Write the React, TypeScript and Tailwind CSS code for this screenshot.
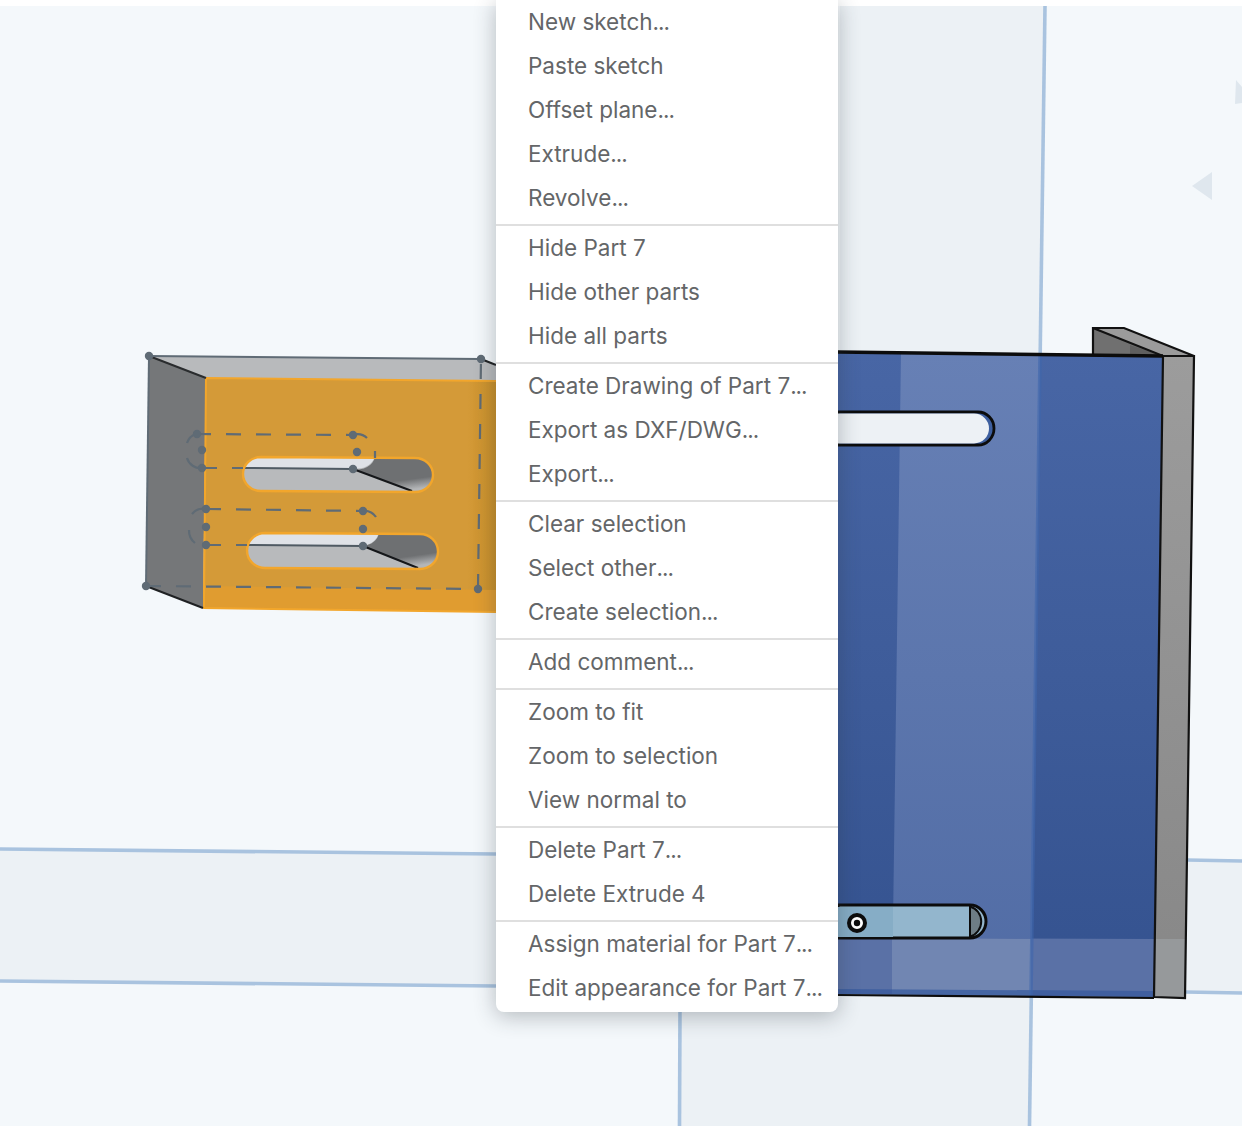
import React from "react";

const menuGroups = [
  ["New sketch...", "Paste sketch", "Offset plane...", "Extrude...", "Revolve..."],
  ["Hide Part 7", "Hide other parts", "Hide all parts"],
  ["Create Drawing of Part 7...", "Export as DXF/DWG...", "Export..."],
  ["Clear selection", "Select other...", "Create selection..."],
  ["Add comment..."],
  ["Zoom to fit", "Zoom to selection", "View normal to"],
  ["Delete Part 7...", "Delete Extrude 4"],
  ["Assign material for Part 7...", "Edit appearance for Part 7..."],
];

function ContextMenu() {
  return (
    <div className="absolute left-[496px] top-0 w-[342px] bg-white rounded-b-lg pb-0.5 shadow-[0_4px_22px_rgba(40,50,60,0.32)] font-['Inter',sans-serif] text-[22.5px] text-[#646668]">
      {menuGroups.map((group, i) => (
        <div
          key={i}
          className={i < menuGroups.length - 1 ? "pb-1 border-b-2 border-[#dfdfdf]" : ""}
        >
          {group.map((label) => (
            <div key={label} className="h-11 flex items-center pl-8 whitespace-pre">
              <span>
                {label.replace("...", "")}
                {label.endsWith("...") && <span className="tracking-[-1px]">...</span>}
              </span>
            </div>
          ))}
        </div>
      ))}
    </div>
  );
}

function Planes() {
  return (
    <g>
      {/* darker plane bands behind the model */}
      <polygon points="840,6 1045,6 1030,1126 680,1126 680,1000 840,1000" fill="#ecf1f5" />
      <polygon points="0,848 496,853 496,985 0,980" fill="#ecf1f5" />
      <polygon points="1185,860 1242,861 1242,993 1185,992" fill="#ecf1f5" />
      <g stroke="#a9c3df" strokeWidth="3.6" fill="none">
        <line x1="1045" y1="6" x2="1029.5" y2="1126" />
        <line x1="680" y1="1010" x2="679.5" y2="1126" />
        <line x1="0" y1="849" x2="496" y2="854" />
        <line x1="0" y1="981" x2="496" y2="986" />
        <line x1="1187" y1="860" x2="1242" y2="861" />
        <line x1="1185" y1="992" x2="1242" y2="993" />
      </g>
      <polygon points="1192,186 1212,172 1212,200" fill="#dfe7ee" />
      <polygon points="1236,80 1242,87 1242,103 1235,104" fill="#dfe7ee" />
    </g>
  );
}

function LeftPart() {
  const slot1 = "M261,457 L415,458 A18,17 0 0 1 415,492 L261,491 A18,17 0 0 1 261,457 Z";
  const slot2 = "M265,533 L420,534 A18,17.5 0 0 1 420,569 L265,568 A18,17.5 0 0 1 265,533 Z";
  return (
    <g>
      <defs>
        <clipPath id="slotA">
          <path d={slot1} />
        </clipPath>
        <clipPath id="slotB">
          <path d={slot2} />
        </clipPath>
        <linearGradient id="orangeEdge" x1="0" x2="1" y1="0" y2="0">
          <stop offset="0.9" stopColor="#d49a38" />
          <stop offset="1" stopColor="#ca9029" />
        </linearGradient>
        <linearGradient id="slotDark" x1="0" x2="0.3" y1="0" y2="1">
          <stop offset="0.74" stopColor="#6e7072" />
          <stop offset="1" stopColor="#b4b6b8" />
        </linearGradient>
      </defs>
      <polygon points="149,356 206,378 203,608 146,586" fill="#757779" />
      <polygon points="149,356 481,359 496,366 496,381 206,378" fill="#b8babc" />
      <polygon points="206,378 496,381 496,612 203,608" fill="url(#orangeEdge)" />
      <polygon points="204,586 496,590 496,612 203,608" fill="#e09c30" />
      <path d="M496,381 L206,378 L204,608 L496,612" fill="none" stroke="#f2a62c" strokeWidth="2" />
      <line x1="149" y1="356" x2="206" y2="378" stroke="#2a2c2e" strokeWidth="2" />
      <line x1="146" y1="586" x2="203" y2="608" stroke="#1f2123" strokeWidth="2" />
      <line x1="481" y1="359" x2="496" y2="365" stroke="#1f2123" strokeWidth="2" />
      <polyline points="149,356 481,359" fill="none" stroke="#5f6b75" strokeWidth="2" />
      <polyline points="149,356 146,586" fill="none" stroke="#5f6b75" strokeWidth="2" />

      <g clipPath="url(#slotA)">
        <rect x="240" y="455" width="195" height="40" fill="#b8babc" />
        <path d="M240,455 L375,455 A18,15 0 0 1 356,468.5 L240,468 Z" fill="#dfe2e7" />
        <path d="M375,457 L436,457 L436,494 L412,491 L353,469 A18,15 0 0 0 375,457 Z" fill="url(#slotDark)" />
        <line x1="353" y1="469" x2="412" y2="491" stroke="#15171a" strokeWidth="2" />
        <line x1="243" y1="468" x2="353" y2="469" stroke="#4f5a63" strokeWidth="2" />
      </g>
      <path d={slot1} fill="none" stroke="#f2a62c" strokeWidth="2.4" />

      <g clipPath="url(#slotB)">
        <rect x="245" y="530" width="195" height="42" fill="#b8babc" />
        <path d="M245,530 L379,530 A18,15 0 0 1 362,545.5 L245,545 Z" fill="#dfe2e7" />
        <path d="M379,533 L441,533 L441,570 L418,568 L363,546 A18,15 0 0 0 379,533 Z" fill="url(#slotDark)" />
        <line x1="363" y1="546" x2="418" y2="568" stroke="#15171a" strokeWidth="2" />
        <line x1="247" y1="545" x2="363" y2="546" stroke="#4f5a63" strokeWidth="2" />
      </g>
      <path d={slot2} fill="none" stroke="#f2a62c" strokeWidth="2.4" />

      {/* sketch overlay */}
      <g fill="none" stroke="#5f6b75" strokeWidth="2.2">
        <line x1="196" y1="434" x2="353" y2="435" strokeDasharray="15 15" />
        <line x1="202" y1="468" x2="243" y2="468" strokeDasharray="15 15" />
        <line x1="206" y1="509" x2="363" y2="511" strokeDasharray="15 15" />
        <line x1="206" y1="545" x2="247" y2="545" strokeDasharray="15 15" />
        <line x1="146" y1="586" x2="478" y2="589" strokeDasharray="15 15" />
        <line x1="478" y1="589" x2="481" y2="359" strokeDasharray="15 15" />
        <path d="M187,443 A14,14 0 0 1 196,434" />
        <path d="M187,458 A14,14 0 0 0 202,468" />
        <path d="M353,435 A14,14 0 0 1 367,438" />
        <path d="M192,514 A14,14 0 0 1 206,509" />
        <path d="M189,530 A16,16 0 0 0 195,543" />
        <path d="M363,511 A14,14 0 0 1 376,517" />
        <path d="M375,451 L375,458" />
      </g>
      <g fill="#5f6b75">
        {[
          [149, 356], [481, 359], [146, 586], [478, 589],
          [197, 434], [353, 435], [202, 450], [202, 468], [357, 452], [353, 469],
          [206, 509], [363, 511], [206, 527], [206, 545], [363, 529], [363, 546],
        ].map(([x, y]) => (
          <circle key={`${x}-${y}`} cx={x} cy={y} r="4.2" />
        ))}
      </g>
    </g>
  );
}

function RightPart() {
  return (
    <g>
      <defs>
        <linearGradient id="blueBase" x1="0" x2="0" y1="0" y2="1">
          <stop offset="0" stopColor="#4866a5" />
          <stop offset="1" stopColor="#34528f" />
        </linearGradient>
        <linearGradient id="blueLight" x1="0" x2="0" y1="0" y2="1">
          <stop offset="0" stopColor="#6780b5" />
          <stop offset="1" stopColor="#516ca5" />
        </linearGradient>
        <linearGradient id="greyFace" x1="0" x2="0" y1="0" y2="1">
          <stop offset="0" stopColor="#9c9c9c" />
          <stop offset="1" stopColor="#878787" />
        </linearGradient>
      </defs>
      {/* back flange */}
      <polygon points="1093,328 1124,328 1194,356 1163,356" fill="#9b9b9b" />
      <polygon points="1093,328 1163,356 1093,354" fill="#707070" />
      <polygon points="1130,345 1163,356 1130,354" fill="#5f5f5f" />
      <polyline points="1093,354 1093,328 1124,328 1194,356 1163,356 1093,328" fill="none" stroke="#111" strokeWidth="2.2" />
      {/* front face */}
      <polygon points="838,352 1163,356 1154,997 838,994" fill="url(#blueBase)" />
      <polygon points="901,353 1040,355 1031,996 892,995" fill="url(#blueLight)" />
      <polygon points="838,938 1155,939 1154,997 838,994" fill="#5a71a6" />
      <polygon points="892,938 1031,939 1031,996 892,995" fill="#7186b2" />
      <polygon points="838,989 1155,991 1154,997 838,994" fill="#35599c" opacity="0.7" />
      <line x1="1040" y1="355" x2="1031" y2="996" stroke="#3f67ad" strokeWidth="3.5" opacity="0.6" />
      {/* side face */}
      <polygon points="1163,356 1194,356 1185,998 1154,997" fill="url(#greyFace)" />
      <polygon points="1155,939 1186,939 1185,998 1154,997" fill="#96999b" />
      <polygon points="1163,356 1194,356 1185,998 1154,997" fill="none" stroke="#111" strokeWidth="2.2" />
      <line x1="838" y1="352" x2="1163" y2="356" stroke="#0c0c0c" strokeWidth="3.5" />
      <line x1="838" y1="995" x2="1154" y2="998" stroke="#0c0c0c" strokeWidth="2.2" />
      {/* upper slot */}
      <path d="M838,412 L978,412 A16,16.5 0 0 1 978,445 L838,445 Z" fill="#3e5f9f" stroke="#0c0c0c" strokeWidth="2.8" />
      <path d="M838,413.5 L974,413.5 A15,15 0 0 1 974,443.5 L838,443.5 Z" fill="#edf1f5" />
      {/* lower slot */}
      <path d="M838,905 L970,905 A16,16.5 0 0 1 970,938 L838,938 Z" fill="#93b6cd" stroke="#0c0c0c" strokeWidth="3" />
      <rect x="838" y="907" width="55" height="30" fill="#86adc6" />
      <path d="M970,906.5 A15,15.5 0 0 1 970,936.5 Z" fill="#6e7d85" stroke="#0c0c0c" strokeWidth="2" />
      <circle cx="857" cy="923" r="8" fill="#fff" stroke="#0c0c0c" strokeWidth="4" />
      <circle cx="857" cy="923" r="3.2" fill="#0c0c0c" />
    </g>
  );
}

export default function App() {
  return (
    <div className="relative w-[1242px] h-[1126px] overflow-hidden bg-white">
      <svg width="1242" height="1126" viewBox="0 0 1242 1126" className="block">
        <rect x="0" y="6" width="1242" height="1120" fill="#f4f8fb" />
        <Planes />
        <LeftPart />
        <RightPart />
      </svg>
      <ContextMenu />
    </div>
  );
}
